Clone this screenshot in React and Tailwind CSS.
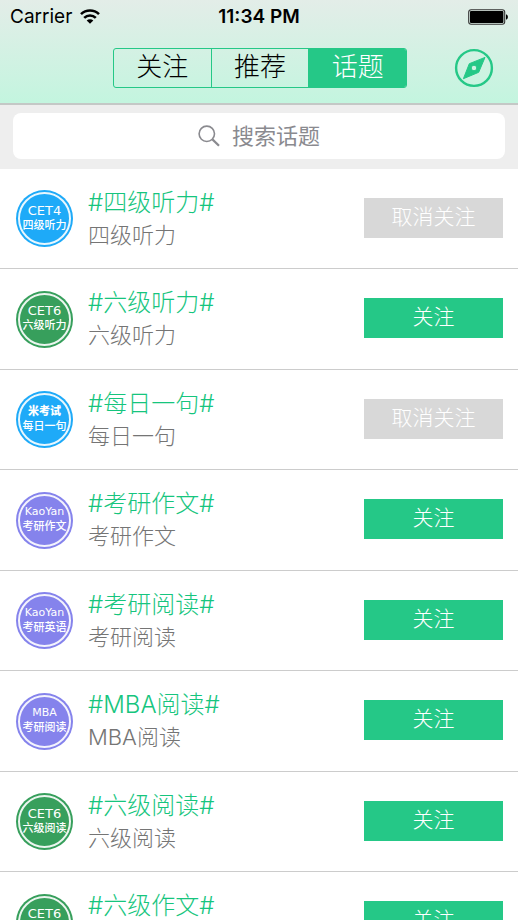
import { useState } from 'react';

const TABS = ['关注', '推荐', '话题'];

const TOPICS = [
  { id: 1, name: '四级听力', badge: ['CET4', '四级听力'], tone: 'blue', followed: true },
  { id: 2, name: '六级听力', badge: ['CET6', '六级听力'], tone: 'green', followed: false },
  { id: 3, name: '每日一句', badge: ['米考试', '每日一句'], tone: 'blue', followed: true },
  { id: 4, name: '考研作文', badge: ['KaoYan', '考研作文'], tone: 'purple', followed: false },
  { id: 5, name: '考研阅读', badge: ['KaoYan', '考研英语'], tone: 'purple', followed: false },
  { id: 6, name: 'MBA阅读', badge: ['MBA', '考研阅读'], tone: 'purple', followed: false },
  { id: 7, name: '六级阅读', badge: ['CET6', '六级阅读'], tone: 'green', followed: false },
  { id: 8, name: '六级作文', badge: ['CET6', '六级作文'], tone: 'green', followed: false },
];

const TONES = {
  blue: 'bg-[#1eaaf8]',
  green: 'bg-[#379f5c]',
  purple: 'bg-[#8583ec]',
};

function labelStyle(text) {
  if (text.startsWith('CET')) return 'text-[13px] font-normal';
  if (text === '米考试') return 'text-[11px] font-black';
  return 'text-[11px] font-normal';
}

function StatusBar() {
  return (
    <div className="grid grid-cols-3 items-center h-[33px] px-2.5 text-black">
      <div className="flex items-center gap-2 text-[19px] leading-6">
        <span>Carrier</span>
        <svg className="w-5 h-4" viewBox="0 0 20 16" fill="none" stroke="currentColor" strokeWidth="2.6" aria-hidden="true">
          <path d="M1 5.1a13 13 0 0 1 18 0" />
          <path d="M4.2 8.9a8.300 8.300 0 0 1 11.600 0" />
          <path d="M10 14.800 6.700 11.600a4.700 4.700 0 0 1 6.600 0z" fill="currentColor" stroke="none" />
        </svg>
      </div>
      <time className="text-center text-[19px] leading-6 font-semibold whitespace-nowrap">11:34 PM</time>
      <svg className="justify-self-end w-10 h-4" viewBox="0 0 40 16" aria-hidden="true">
        <rect x="0.7" y="0.7" width="36" height="14.6" rx="2.5" fill="none" stroke="#333" strokeWidth="1.1" />
        <rect x="2" y="2" width="33.4" height="12" rx="1" fill="#000" />
        <path d="M38 5.3c1.2.4 1.9 1.4 1.9 2.7s-.7 2.3-1.9 2.7z" fill="#000" />
      </svg>
    </div>
  );
}

function Segments({ active, onChange }) {
  return (
    <div role="tablist" className="flex w-[294px] h-10 rounded-[3px] border border-[#25c887] divide-x divide-[#25c887] overflow-hidden">
      {TABS.map((tab) => (
        <button
          key={tab}
          type="button"
          role="tab"
          aria-selected={active === tab}
          onClick={() => onChange(tab)}
          className={`flex-1 pb-0.5 text-[26px] leading-8 font-light ${active === tab ? 'bg-[#25c887] text-white' : 'text-black'}`}
        >
          {tab}
        </button>
      ))}
    </div>
  );
}

function CompassIcon() {
  return (
    <svg className="w-10 h-10" viewBox="0 0 40 40" aria-hidden="true">
      <circle cx="20" cy="20" r="17.9" fill="none" stroke="#25c887" strokeWidth="2.4" />
      <path
        fillRule="evenodd"
        fill="#25c887"
        stroke="#25c887"
        strokeWidth="1"
        strokeLinejoin="round"
        d="M31 9.400 24.700 24.300 9.400 30.700 15.300 15.700zM20 17.200a2.800 2.800 0 1 0 0 5.600a2.800 2.800 0 0 0 0-5.600z"
      />
    </svg>
  );
}

function SearchBar() {
  return (
    <div className="px-[13px] pt-2 pb-2.5 bg-[#eeeeee]">
      <label className="flex items-center justify-center gap-3 h-[46px] rounded-lg bg-white text-[#8a8a8f]">
        <svg className="w-[22px] h-[22px]" viewBox="0 0 22 22" fill="none" stroke="currentColor" aria-hidden="true">
          <circle cx="8.8" cy="8.8" r="7.7" strokeWidth="1.6" />
          <path d="m14.4 14.4 6.6 6.3" strokeWidth="2.2" />
        </svg>
        <input
          type="search"
          aria-label="搜索话题"
          placeholder="搜索话题"
          className="field-sizing-content pb-1 text-[22px] leading-8 font-normal outline-none placeholder:text-[#8a8a8f]"
        />
      </label>
    </div>
  );
}

function Badge({ lines, tone }) {
  return (
    <div className={`shrink-0 size-[57px] p-0.5 rounded-full ${TONES[tone]}`}>
      <div className="flex flex-col items-center justify-center h-full pb-0.5 rounded-full border-2 border-white/90 text-white whitespace-nowrap">
        <span className={`leading-[14px] font-['DejaVu_Sans','Noto_Sans_CJK_SC',sans-serif] ${labelStyle(lines[0])}`}>
          {lines[0]}
        </span>
        <span className="text-[11px] leading-[14px] font-medium">{lines[1]}</span>
      </div>
    </div>
  );
}

function TopicRow({ topic, onToggle }) {
  return (
    <li className="flex items-center h-[100px] even:h-[101px] pl-4 pr-[15px] border-b border-[#cccccc]">
      <Badge lines={topic.badge} tone={topic.tone} />
      <div className="flex-1 min-w-0 ml-[15px] font-light">
        <h2 className="text-2xl leading-8 text-[#16c57e] truncate">#{topic.name}#</h2>
        <p className="text-[22px] leading-8 text-[#757575] truncate">{topic.name}</p>
      </div>
      <button
        type="button"
        onClick={() => onToggle(topic.id)}
        className={`shrink-0 w-[139px] h-10 mb-0.5 pb-0.5 text-[21px] leading-8 font-light text-white ${topic.followed ? 'bg-[#d8d8d8]' : 'bg-[#25c887]'}`}
      >
        {topic.followed ? '取消关注' : '关注'}
      </button>
    </li>
  );
}

export default function App() {
  const [tab, setTab] = useState('话题');
  const [topics, setTopics] = useState(TOPICS);

  const toggle = (id) =>
    setTopics((list) => list.map((t) => (t.id === id ? { ...t, followed: !t.followed } : t)));

  return (
    <div className="h-screen flex flex-col overflow-hidden bg-white font-['Inter','Noto_Sans_CJK_SC',sans-serif]">
      <header className="shrink-0 border-b-2 border-[#c4c8c6] bg-linear-to-b from-[#e3ede8] to-[#c3f5df]">
        <StatusBar />
        <div className="grid grid-cols-[1fr_auto_1fr] items-center py-[15px] pr-6 pl-[26px]">
          <span />
          <Segments active={tab} onChange={setTab} />
          <button type="button" aria-label="发现" className="justify-self-end">
            <CompassIcon />
          </button>
        </div>
      </header>
      <SearchBar />
      <ul className="flex-1 min-h-0 overflow-hidden">
        {topics.map((topic) => (
          <TopicRow key={topic.id} topic={topic} onToggle={toggle} />
        ))}
      </ul>
    </div>
  );
}
